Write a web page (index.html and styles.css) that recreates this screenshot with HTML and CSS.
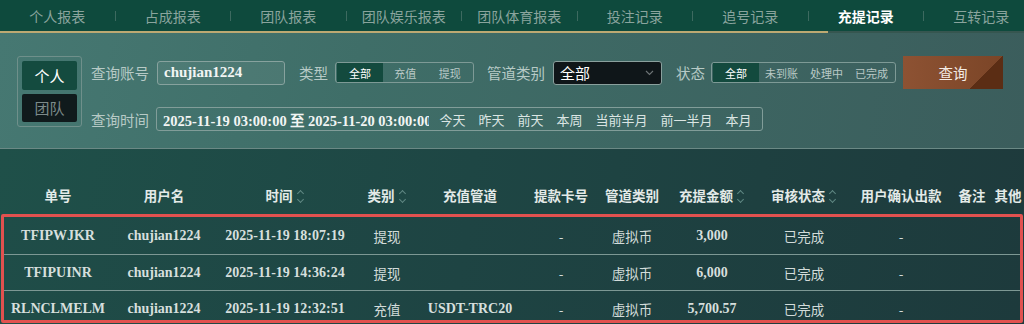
FILE: index.html
```html
<!DOCTYPE html>
<html lang="zh-CN">
<head>
  <meta charset="UTF-8">
  <meta name="viewport" content="width=device-width, initial-scale=1.0">
  <title>充提记录</title>
  <link rel="stylesheet" href="styles.css">
</head>
<body>
  <div class="tabs">
    <span class="tab">个人报表</span><i class="sep"></i>
    <span class="tab">占成报表</span><i class="sep"></i>
    <span class="tab">团队报表</span><i class="sep"></i>
    <span class="tab">团队娱乐报表</span><i class="sep"></i>
    <span class="tab">团队体育报表</span><i class="sep"></i>
    <span class="tab">投注记录</span><i class="sep"></i>
    <span class="tab">追号记录</span><i class="sep"></i>
    <span class="tab active">充提记录</span><i class="sep"></i>
    <span class="tab">互转记录</span>
  </div>
  <div class="tab-line"></div>

  <div class="filter">
    <div class="who">
      <button class="who-btn on">个人</button>
      <button class="who-btn">团队</button>
    </div>
    <div class="form">
      <div class="row">
        <span class="label">查询账号</span>
        <input class="account" type="text" value="chujian1224">
        <span class="label type-label">类型</span>
        <div class="seg seg-type">
          <span class="on">全部</span><span>充值</span><span>提现</span>
        </div>
        <span class="label pipe-label">管道类别</span>
        <div class="select">全部
          <svg width="9" height="6" viewBox="0 0 9 6"><path d="M1 1l3.5 3.5L8 1" fill="none" stroke="#6d7476" stroke-width="1.1"/></svg>
        </div>
        <span class="label state-label">状态</span>
        <div class="seg seg-state">
          <span class="on">全部</span><span>未到账</span><span>处理中</span><span>已完成</span>
        </div>
        <button class="search">查询</button>
      </div>
      <div class="row row-time">
        <span class="label">查询时间</span>
        <div class="dates">
          <div class="range">2025-11-19 03:00:00 至 2025-11-20 03:00:00</div>
          <span class="quick">今天</span>
          <span class="quick">昨天</span>
          <span class="quick">前天</span>
          <span class="quick">本周</span>
          <span class="quick">当前半月</span>
          <span class="quick">前一半月</span>
          <span class="quick">本月</span>
        </div>
      </div>
    </div>
  </div>

  <div class="records">
    <div class="grid head">
      <span>单号</span>
      <span>用户名</span>
      <span>时间<i class="sort"></i></span>
      <span>类别<i class="sort"></i></span>
      <span>充值管道</span>
      <span>提款卡号</span>
      <span>管道类别</span>
      <span>充提金额<i class="sort"></i></span>
      <span>审核状态<i class="sort"></i></span>
      <span>用户确认出款</span>
      <span>备注</span>
      <span>其他</span>
    </div>
    <div class="rows">
      <div class="grid item">
        <span>TFIPWJKR</span><span>chujian1224</span><span>2025-11-19 18:07:19</span>
        <span class="cn">提现</span><span></span><span class="cn">-</span><span class="cn">虚拟币</span>
        <span>3,000</span><span class="cn">已完成</span><span class="cn">-</span><span></span><span></span>
      </div>
      <div class="grid item">
        <span>TFIPUINR</span><span>chujian1224</span><span>2025-11-19 14:36:24</span>
        <span class="cn">提现</span><span></span><span class="cn">-</span><span class="cn">虚拟币</span>
        <span>6,000</span><span class="cn">已完成</span><span class="cn">-</span><span></span><span></span>
      </div>
      <div class="grid item">
        <span>RLNCLMELM</span><span>chujian1224</span><span>2025-11-19 12:32:51</span>
        <span class="cn">充值</span><span>USDT-TRC20</span><span class="cn">-</span><span class="cn">虚拟币</span>
        <span>5,700.57</span><span class="cn">已完成</span><span class="cn">-</span><span></span><span></span>
      </div>
    </div>
  </div>
</body>
</html>
```

FILE: styles.css
```css
* { box-sizing: border-box; }
body {
  margin: 0;
  width: 1024px;
  height: 324px;
  overflow: hidden;
  background: #1e4044;
  font-family: "Noto Sans CJK SC", "Noto Sans", sans-serif;
  color: #dfe7e5;
}

/* top tabs */
.tabs {
  display: flex;
  align-items: center;
  height: 31px;
  background: #0e4a3d;
  white-space: nowrap;
}
.tab {
  flex: 0 0 114.5px;
  text-align: center;
  font-size: 14px;
  color: #8aa49d;
}
.tab.active { color: #fff; font-weight: bold; }
.sep {
  flex: 0 0 1px;
  height: 10px;
  background: #3d6a60;
}
.tab-line {
  height: 2px;
  background: linear-gradient(to right, #bda972 0 828px, #365650 828px);
}

/* filter */
.filter {
  display: flex;
  align-items: flex-start;
  height: 116px;
  padding: 23px 0 0 17px;
  background: linear-gradient(100deg, #467872 0%, #3f6e68 35%, #3b5d5c 100%);
  border-bottom: 1px solid #6b8985;
}
.who {
  display: flex;
  flex-direction: column;
  gap: 4px;
  width: 65px;
  height: 71px;
  padding: 4px;
  border: 1px solid #6f908b;
  border-radius: 3px;
}
.who-btn {
  height: 29px;
  border: none;
  border-radius: 2px;
  font-family: inherit;
  font-size: 15px;
  background: #101a1c;
  color: #7c8a8a;
}
.who-btn.on { background: #144b3f; color: #fff; }

.form { margin-left: 9px; }
.row {
  display: flex;
  align-items: center;
  height: 33px;
  white-space: nowrap;
}
.row-time { margin-top: 18px; height: 24px; }
.label {
  font-size: 14.5px;
  color: #b7cac6;
}
.account {
  width: 128px;
  height: 24px;
  margin-left: 8px;
  padding: 0 6px;
  border: 1px solid #87a29e;
  border-radius: 3px;
  background: rgba(255, 255, 255, 0.06);
  font-family: "Liberation Serif", serif;
  font-weight: bold;
  font-size: 15px;
  color: #f2f5f4;
}
.type-label { margin-left: 14px; }
.pipe-label { margin-left: 13px; }
.state-label { margin-left: 14px; }
.seg {
  display: flex;
  height: 21px;
  margin-left: 7px;
  padding: 0 1px;
  border: 1px solid #7e9a96;
  border-radius: 3px;
  font-size: 11px;
  color: #b9c9c6;
}
.seg span {
  display: flex;
  flex: 1;
  align-items: center;
  justify-content: center;
}
.seg span.on { flex: 0 0 46px; background: #134a3e; color: #fff; }
.seg-type { width: 139px; }
.seg-state { width: 185px; margin-left: 6px; }

.select {
  display: flex;
  align-items: center;
  justify-content: space-between;
  width: 109px;
  height: 24px;
  margin-left: 8px;
  padding: 0 7px 0 6px;
  border: 1px solid #8aa09d;
  border-radius: 3px;
  background: #0f1619;
  font-size: 15px;
  color: #fff;
}
.search {
  position: relative;
  overflow: hidden;
  width: 100px;
  height: 33px;
  margin-left: 7px;
  border: none;
  background: linear-gradient(to right, #8d5233, #7b4527);
  font-family: inherit;
  font-size: 14.5px;
  color: #f4ece6;
}
.search::after {
  content: "";
  position: absolute;
  right: 0;
  bottom: 0;
  width: 34px;
  height: 33px;
  background: linear-gradient(to bottom right, transparent 50%, #5b2d14 50%);
}

.dates {
  display: flex;
  align-items: center;
  width: 607px;
  height: 24px;
  margin-left: 7px;
  border: 1px solid #819d99;
  border-radius: 3px;
}
.range {
  width: 272px;
  padding-left: 6px;
  overflow: hidden;
  font-family: "Liberation Serif", serif;
  font-weight: bold;
  font-size: 14.5px;
  color: #f2f5f4;
}
.quick {
  padding: 0 6.5px;
  font-size: 13px;
  color: #dbe5e3;
}
.range + .quick { margin-left: 4px; }

/* table */
.records {
  height: 175px;
  background: linear-gradient(100deg, #1f5049 0%, #1e4644 45%, #1e3a3c 100%);
}
.grid {
  display: grid;
  grid-template-columns: 114px 98px 144px 60px 106px 76px 66px 94px 90px 104px 38px 34px;
  align-items: center;
  text-align: center;
}
.head {
  height: 65px;
  padding: 0 0 9px 1px;
  align-items: end;
  font-size: 13.5px;
  font-weight: bold;
  color: #e3eae8;
  line-height: 20px;
  white-space: nowrap;
}
.sort {
  position: relative;
  display: inline-block;
  width: 8px;
  height: 15px;
  margin-left: 4px;
  vertical-align: -3px;
}
.sort::before, .sort::after {
  content: "";
  position: absolute;
  left: 1px;
  width: 4px;
  height: 4px;
  border-left: 1px solid #5f8782;
  border-top: 1px solid #5f8782;
}
.sort::before { top: 2px; transform: rotate(45deg); }
.sort::after { bottom: 2px; transform: rotate(225deg); }

.rows {
  height: 109px;
  margin: 0 1px;
  overflow: hidden;
  border: 3px solid #e2514f;
  border-radius: 2px;
  background: linear-gradient(100deg, #1f4d48 0%, #1e4443 45%, #1d3a3c 100%);
}
.item {
  height: 36px;
  margin-left: -3px;
  font-family: "Liberation Serif", serif;
  font-weight: bold;
  font-size: 14px;
  color: #d6dfdd;
}
.item + .item { border-top: 1px solid #7d9894; }
.item:first-child { height: 37px; }
.item .cn {
  font-family: "Noto Sans CJK SC", sans-serif;
  font-weight: normal;
  font-size: 13.5px;
  color: #d3dcda;
}
```
